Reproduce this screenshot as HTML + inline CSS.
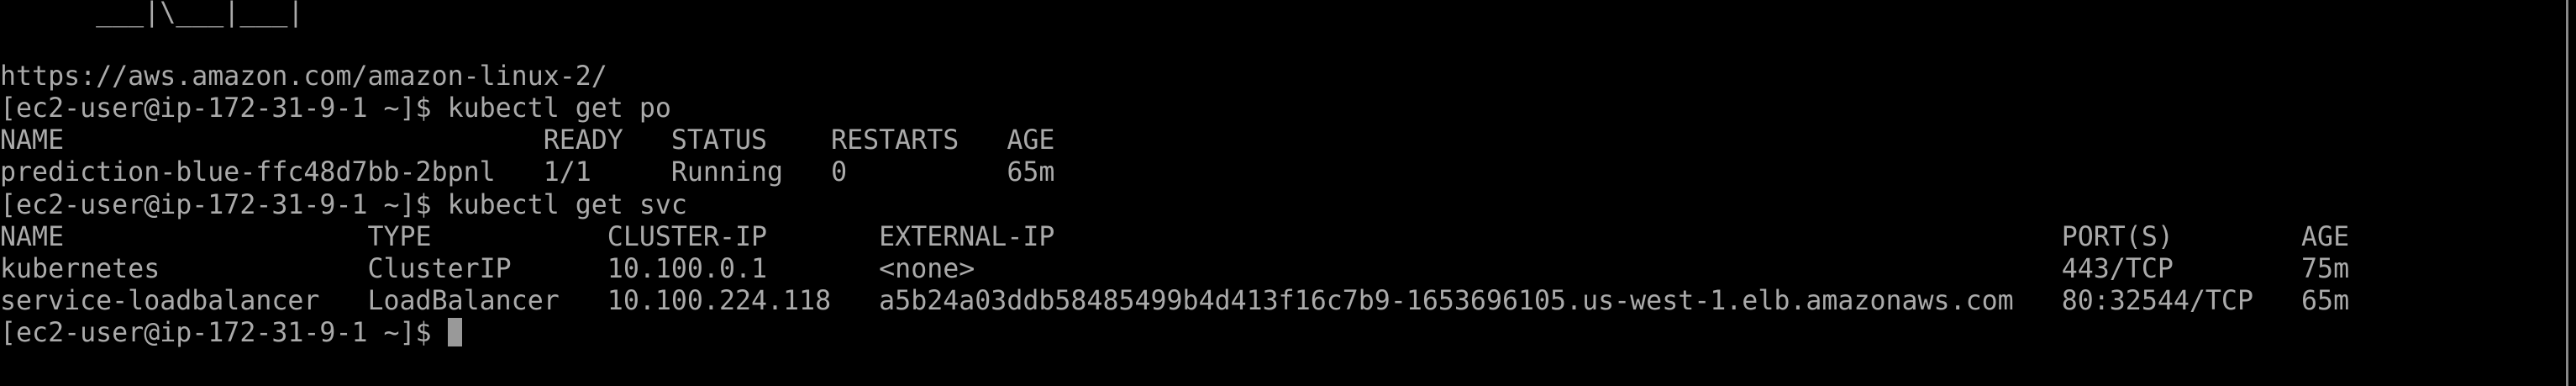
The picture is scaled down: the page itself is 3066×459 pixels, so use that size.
<!DOCTYPE html>
<html><head><meta charset="utf-8"><style>
html,body{margin:0;padding:0;background:#000;width:3066px;height:459px;overflow:hidden}
pre{margin:0;position:absolute;left:0;top:-4px;font-family:"DejaVu Sans Mono","Liberation Mono",monospace;font-size:31.6px;line-height:38.1px;color:#aaa;white-space:pre}
.cur{display:inline-block;width:17px;height:34px;background:#999;vertical-align:-6px}
.bar{position:absolute;left:3054px;top:0;width:3px;height:459px;background:#888}
</style></head><body>
<pre>      ___|\___|___|

https://aws.amazon.com/amazon-linux-2/
[ec2-user@ip-172-31-9-1 ~]$ kubectl get po
NAME                              READY   STATUS    RESTARTS   AGE
prediction-blue-ffc48d7bb-2bpnl   1/1     Running   0          65m
[ec2-user@ip-172-31-9-1 ~]$ kubectl get svc
NAME                   TYPE           CLUSTER-IP       EXTERNAL-IP                                                               PORT(S)        AGE
kubernetes             ClusterIP      10.100.0.1       &lt;none&gt;                                                                    443/TCP        75m
service-loadbalancer   LoadBalancer   10.100.224.118   a5b24a03ddb58485499b4d413f16c7b9-1653696105.us-west-1.elb.amazonaws.com   80:32544/TCP   65m
[ec2-user@ip-172-31-9-1 ~]$ <span class="cur"></span></pre>
<div class="bar"></div>
</body></html>
